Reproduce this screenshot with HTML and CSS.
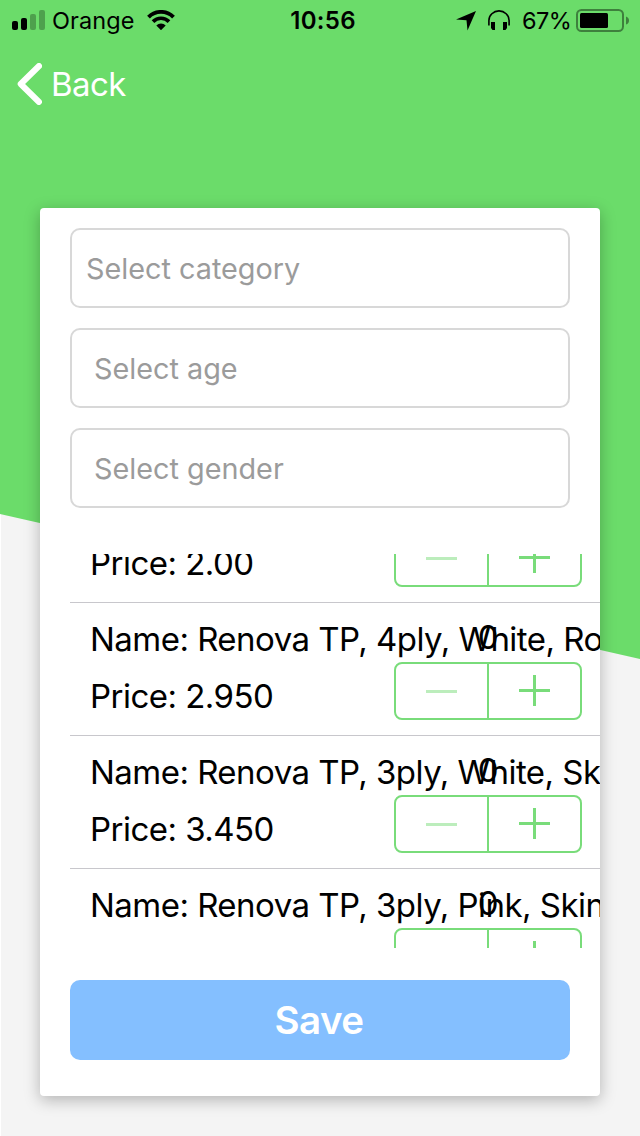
FILE: index.html
```html
<!DOCTYPE html>
<html lang="en">
<head>
<meta charset="utf-8">
<title>Products</title>
<link rel="stylesheet" href="styles.css">
</head>
<body>
<div class="screen">
  <header class="status">
    <div class="status-left">
      <svg class="signal" width="33" height="20" viewBox="0 0 33 20">
        <rect x="0" y="11" width="6" height="9" rx="2"/>
        <rect x="9" y="8" width="6" height="12" rx="2"/>
        <rect x="18" y="4" width="6" height="16" rx="2" opacity=".27"/>
        <rect x="27" y="0" width="6" height="20" rx="2" opacity=".27"/>
      </svg>
      <span class="carrier">Orange</span>
      <svg class="wifi" width="28" height="20" viewBox="0 0 28 20">
        <path d="M1.500 7.100a17.600 17.600 0 0 1 25 0" fill="none" stroke="#000" stroke-width="3.900"/>
        <path d="M6 11.600a11.200 11.200 0 0 1 16 0" fill="none" stroke="#000" stroke-width="3.700"/>
        <path d="M9.300 15.600a6.400 6.400 0 0 1 9.400 0L14 20.200z"/>
      </svg>
    </div>
    <span class="time">10:56</span>
    <div class="status-right">
      <svg class="location" width="20" height="20" viewBox="0 0 20 20"><path d="M20 0L11.500 19.500L10.500 9.300L0 8.500z"/></svg>
      <svg class="phones" width="22" height="20" viewBox="0 0 22 20">
        <path d="M.9 15.500V10.500a10.100 9.600 0 0 1 20.200 0v5" fill="none" stroke="#000" stroke-width="1.600"/>
        <path d="M3 12h4v8H4.500L3 18zM15 12h4v6l-1.500 2H15z"/>
      </svg>
      <span class="percent">67%</span>
      <svg class="battery" width="53" height="23" viewBox="0 0 53 23">
        <rect x="1" y="1" width="46" height="21" rx="4.500" fill="none" stroke="#000" stroke-opacity=".42" stroke-width="2"/>
        <rect x="4" y="4" width="28" height="15" rx="1.500"/>
        <path d="M50 7.500q3 1 3 4t-3 4z" opacity=".42"/>
      </svg>
    </div>
  </header>
  <nav class="nav">
    <svg class="chevron" width="25" height="42" viewBox="0 0 25 42"><path d="M22 3L3.700 21L22 39" fill="none" stroke="#fff" stroke-width="6" stroke-linecap="round" stroke-linejoin="round"/></svg>
    <span class="back">Back</span>
  </nav>
  <main class="card">
    <div class="field field-first"><span>Select category</span></div>
    <div class="field"><span>Select age</span></div>
    <div class="field"><span>Select gender</span></div>
    <section class="list">
      <div class="row row-top">
        <div class="name"></div>
        <div class="price">Price: 2.00</div>
        <div class="qty"><span class="count"></span><svg class="stepper" width="188" height="58" viewBox="0 0 188 58"><rect x="1" y="1" width="186" height="56" rx="7"/><path d="M94 1V57"/><path class="minus" d="M32 29.500H63"/><path class="plus" d="M125 28.500H156M140.500 13V44"/></svg></div>
      </div>
      <div class="row">
        <div class="name">Name: Renova TP, 4ply, White, Roll</div>
        <div class="price">Price: 2.950</div>
        <div class="qty"><span class="count">0</span><svg class="stepper" width="188" height="58" viewBox="0 0 188 58"><rect x="1" y="1" width="186" height="56" rx="7"/><path d="M94 1V57"/><path class="minus" d="M32 29.500H63"/><path class="plus" d="M125 28.500H156M140.500 13V44"/></svg></div>
      </div>
      <div class="row">
        <div class="name">Name: Renova TP, 3ply, White, Skin</div>
        <div class="price">Price: 3.450</div>
        <div class="qty"><span class="count">0</span><svg class="stepper" width="188" height="58" viewBox="0 0 188 58"><rect x="1" y="1" width="186" height="56" rx="7"/><path d="M94 1V57"/><path class="minus" d="M32 29.500H63"/><path class="plus" d="M125 28.500H156M140.500 13V44"/></svg></div>
      </div>
      <div class="row">
        <div class="name">Name: Renova TP, 3ply, Pink, Skin</div>
        <div class="price"></div>
        <div class="qty"><span class="count">0</span><svg class="stepper" width="188" height="58" viewBox="0 0 188 58"><rect x="1" y="1" width="186" height="56" rx="7"/><path d="M94 1V57"/><path class="minus" d="M32 29.500H63"/><path class="plus" d="M125 28.500H156M140.500 13V44"/></svg></div>
      </div>
    </section>
    <button class="save">Save</button>
  </main>
</div>
</body>
</html>
```
FILE: styles.css
```css
* { box-sizing: border-box; }
body { margin: 0; font-family: Inter, "Liberation Sans", sans-serif; color: #000; }
svg { display: block; flex: none; }
.screen { position: relative; width: 640px; height: 1136px; overflow: hidden; background: linear-gradient(90deg, #fff 1px, #f4f4f4 1px); }
.screen::before { content: ""; position: absolute; inset: 0; background: #6bdc6a; clip-path: polygon(0 0, 640px 0, 640px 659px, 0 514px); }
.status { position: relative; height: 40px; display: grid; grid-template-columns: 1fr auto 1fr; padding: 0 12px; white-space: nowrap; }
.status-left, .status-right { display: flex; align-items: flex-start; }
.status-right { justify-content: flex-end; }
.signal, .wifi { margin-top: 10px; }
.carrier, .time, .percent { font-size: 23.500px; line-height: 40px; padding-top: 1px; }
.carrier { margin-left: 7px; width: 84px; letter-spacing: 0.1px; }
.wifi { margin-left: 11px; }
.time { font-size: 24px; font-weight: 600; letter-spacing: 0.3px; padding-left: 6px; }
.location { margin-top: 11px; margin-right: 12px; }
.phones { margin-top: 10px; margin-right: 12px; }
.percent { width: 54px; letter-spacing: -0.5px; }
.battery { margin-top: 9px; margin-right: -1px; }
.nav { position: relative; height: 88px; display: flex; align-items: center; padding-left: 17px; color: #fff; }
.back { font-size: 33px; margin-left: 9px; letter-spacing: -0.6px; }
.card { position: relative; width: 560px; height: 888px; margin: 80px 0 0 40px; padding-left: 30px; background: #fff; border-radius: 4px; box-shadow: 0 4px 16px rgba(0,0,0,.27); display: flex; flex-direction: column; }
.field { width: 500px; height: 80px; margin-top: 20px; border: 2px solid #d8d8d8; border-radius: 10px; padding-left: 22px; line-height: 77px; font-size: 28.800px; color: #9b9b9b; flex: none; }
.field-first { padding-left: 14px; }
.list { height: 394px; width: 530px; margin-top: 46px; overflow: hidden; flex: none; }
.row { position: relative; height: 133px; padding: 12px 0 0 20px; border-bottom: 1px solid #c8c7cc; white-space: nowrap; font-size: 33px; letter-spacing: -0.53px; }
.row-top { margin-top: -84px; }
.name { height: 49px; line-height: 48px; }
.price { height: 57px; line-height: 64px; }
.qty { position: absolute; left: 324px; top: 11px; width: 188px; display: flex; flex-direction: column; align-items: center; }
.count { height: 48px; line-height: 46px; }
.stepper { fill: none; stroke: #79dc7a; stroke-width: 2; }
.minus, .plus { stroke-width: 3; }
.minus { opacity: .5; }
.save { width: 500px; height: 80px; margin: 32px 0 0; padding: 0 2px 0 0; border: 0; border-radius: 10px; background: #84bfff; color: #fff; font: 600 38.500px/80px Inter, "Liberation Sans", sans-serif; letter-spacing: -0.6px; flex: none; }
```
